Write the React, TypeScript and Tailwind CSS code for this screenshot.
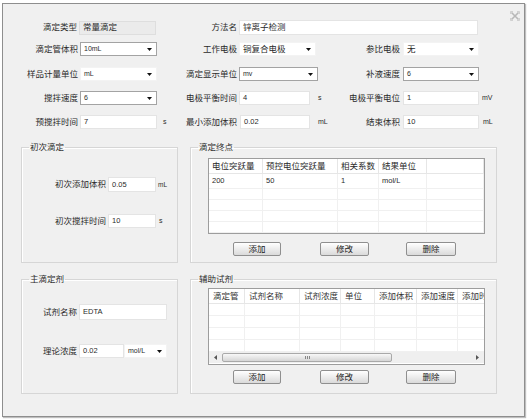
import React from "react";

const Arrow = () => (
  <svg width="5" height="3" viewBox="0 0 5 3" className="shrink-0">
    <path d="M0 0h5L2.5 3z" fill="#111" />
  </svg>
);

function Select({ w, value, bordered, small }: { w: string; value: string; bordered?: boolean; small?: boolean }) {
  return (
    <div
      className={`${w} h-[14px] shrink-0 bg-white flex items-center justify-between pl-[3px] pr-[4px] border ${
        bordered ? "border-[#a3a3a3]" : "border-[#f3f3f3]"
      }`}
    >
      <span className={small ? "text-[7px]" : "text-[8.5px]"}>{value}</span>
      <Arrow />
    </div>
  );
}

function Input({ w, value, h = "h-[14px]" }: { w: string; value?: string; h?: string }) {
  return (
    <div className={`${w} ${h} shrink-0 bg-white border border-[#e4e4e4] pl-[3px] flex items-center text-[7.5px]`}>
      {value}
    </div>
  );
}

function Btn({ label, w, ml }: { label: string; w: string; ml: string }) {
  return (
    <div
      className={`${w} ${ml} h-[14px] border border-[#8f8f8f] rounded-[2px] bg-gradient-to-b from-white to-[#dadada] flex items-center justify-center text-[8.5px] text-[#222]`}
    >
      {label}
    </div>
  );
}

function Group({ title, w, h, children }: { title: string; w: string; h: string; children: React.ReactNode }) {
  return (
    <fieldset className={`${w} ${h} border border-[#d6d6d6] shadow-[inset_1px_1px_0_#fff]`}>
      <legend className="ml-[7px] px-[1px] text-[8.5px] leading-[10px]">{title}</legend>
      {children}
    </fieldset>
  );
}

export default function App() {
  const endpointRows = [["200", "50", "1", "mol/L", ""], ["", "", "", "", ""], ["", "", "", "", ""], ["", "", "", "", ""], ["", "", "", "", ""]];
  const auxCols = ["滴定管", "试剂名称", "试剂浓度", "单位", "添加体积", "添加速度", "添加时间"];

  return (
    <div className="w-[528px] h-[420px] bg-white pt-[3px] pl-[2px] font-['Liberation_Sans','Noto_Sans_CJK_SC',sans-serif] text-[#2a2a2a]">
      <div className="relative w-[523px] h-[414px] border border-[#8e8e8e] bg-[#f0f0f0] shadow-[1px_1px_1px_rgba(0,0,0,0.25)] pt-[16px]">
        {/* close */}
        <svg className="absolute top-[7px] right-[4px]" width="10" height="10" viewBox="0 0 10 10">
          <path d="M1.5 1.5l7 7M8.5 1.5l-7 7" stroke="#b8b8b8" strokeWidth="1.6" />
          <path d="M0.5 3V0.5H3M7 0.5h2.5V3M9.5 7v2.5H7M3 9.5H0.5V7" stroke="#c8c8c8" strokeWidth="0.8" fill="none" />
        </svg>

        {/* row 1 */}
        <div className="flex items-center h-[15px] text-[8.5px]">
          <div className="w-[74px] text-right shrink-0">滴定类型</div>
          <div className="w-[77px] h-[14px] ml-[2px] bg-[#ebebeb] border border-[#dedede] pl-[3px] flex items-center">常量滴定</div>
          <div className="w-[81px] text-right shrink-0">方法名</div>
          <div className="w-[239px] h-[15px] ml-[2px] bg-white border border-[#e4e4e4] pl-[3px] flex items-center">锌离子检测</div>
        </div>

        {/* row 2 */}
        <div className="flex items-center h-[14px] mt-[7px] text-[8.5px]">
          <div className="w-[75px] text-right shrink-0">滴定管体积</div>
          <div className="ml-[2px]"><Select w="w-[77px]" value="10mL" bordered small /></div>
          <div className="w-[80px] text-right shrink-0">工作电极</div>
          <div className="ml-[2px]"><Select w="w-[77px]" value="铜复合电极" /></div>
          <div className="w-[84px] text-right shrink-0">参比电极</div>
          <div className="ml-[3px]"><Select w="w-[76px]" value="无" /></div>
        </div>

        {/* row 3 */}
        <div className="flex items-center h-[14px] mt-[11px] text-[8.5px]">
          <div className="w-[75px] text-right shrink-0">样品计量单位</div>
          <div className="ml-[2px]"><Select w="w-[77px]" value="mL" small /></div>
          <div className="w-[80px] text-right shrink-0">滴定显示单位</div>
          <div className="ml-[2px]"><Select w="w-[79px]" value="mv" bordered small /></div>
          <div className="w-[82px] text-right shrink-0">补液速度</div>
          <div className="ml-[3px]"><Select w="w-[76px]" value="6" bordered small /></div>
        </div>

        {/* row 4 */}
        <div className="flex items-center h-[14px] mt-[10px] text-[8.5px]">
          <div className="w-[75px] text-right shrink-0">搅拌速度</div>
          <div className="ml-[2px]"><Select w="w-[77px]" value="6" bordered small /></div>
          <div className="w-[80px] text-right shrink-0">电极平衡时间</div>
          <div className="ml-[2px]"><Input w="w-[71px]" value="4" /></div>
          <div className="w-[90px] shrink-0 flex justify-between items-center">
            <span className="pl-[8px] text-[7px]">s</span>
            <span>电极平衡电位</span>
          </div>
          <div className="ml-[3px]"><Input w="w-[76px]" value="1" /></div>
          <span className="ml-[3px] text-[7px]">mV</span>
        </div>

        {/* row 5 */}
        <div className="flex items-center h-[14px] mt-[10px] text-[8.5px]">
          <div className="w-[75px] text-right shrink-0">预搅拌时间</div>
          <div className="ml-[2px]"><Input w="w-[77px]" value="7" /></div>
          <div className="w-[80px] shrink-0 flex justify-between items-center">
            <span className="pl-[6px] text-[7px]">s</span>
            <span>最小添加体积</span>
          </div>
          <div className="ml-[3px]"><Input w="w-[70px]" value="0.02" /></div>
          <div className="w-[90px] shrink-0 flex justify-between items-center">
            <span className="pl-[8px] text-[7px]">mL</span>
            <span>结束体积</span>
          </div>
          <div className="ml-[3px]"><Input w="w-[76px]" value="10" /></div>
          <span className="ml-[4px] text-[7px]">mL</span>
        </div>

        {/* top groups */}
        <div className="flex gap-[12px] ml-[18px] mt-[13px]">
          <Group title="初次滴定" w="w-[157px]" h="h-[121px]">
            <div className="flex items-center mt-[25px] text-[8.5px]">
              <div className="w-[84px] text-right shrink-0">初次添加体积</div>
              <div className="ml-[2px]"><Input w="w-[48px]" h="h-[15px]" value="0.05" /></div>
              <span className="ml-[2px] text-[6.5px]">mL</span>
            </div>
            <div className="flex items-center mt-[22px] text-[8.5px]">
              <div className="w-[84px] text-right shrink-0">初次搅拌时间</div>
              <div className="ml-[2px]"><Input w="w-[48px]" h="h-[14px]" value="10" /></div>
              <span className="ml-[3px] text-[7px]">s</span>
            </div>
          </Group>

          <Group title="滴定终点" w="w-[307px]" h="h-[121px]">
            <div className="ml-[17px] mt-[6px] w-[277px] h-[76px] border border-[#9d9d9d] bg-white overflow-hidden">
              <div className="grid grid-cols-[54px_75px_41px_48px_1fr] h-[15px] text-[8.5px] border-b border-[#e6e6e6]">
                {["电位突跃量", "预控电位突跃量", "相关系数", "结果单位", ""].map((c, i) => (
                  <div key={i} className="pl-[3px] border-r border-[#e6e6e6] flex items-center whitespace-nowrap overflow-hidden">{c}</div>
                ))}
              </div>
              {endpointRows.map((r, ri) => (
                <div
                  key={ri}
                  className={`grid grid-cols-[54px_75px_41px_48px_1fr] ${ri === 0 ? "h-[15px]" : "h-[11px]"} text-[7.5px] border-b border-[#f0f0f0]`}
                >
                  {r.map((c, i) => (
                    <div key={i} className="pl-[3px] border-r border-[#f0f0f0] flex items-center">{c}</div>
                  ))}
                </div>
              ))}
            </div>
            <div className="flex mt-[8px]">
              <Btn label="添加" w="w-[48px]" ml="ml-[42px]" />
              <Btn label="修改" w="w-[49px]" ml="ml-[39px]" />
              <Btn label="删除" w="w-[50px]" ml="ml-[37px]" />
            </div>
          </Group>
        </div>

        {/* bottom groups */}
        <div className="flex gap-[12px] ml-[18px] mt-[11px]">
          <Group title="主滴定剂" w="w-[157px]" h="h-[120px]">
            <div className="flex items-center mt-[20px] text-[8.5px]">
              <div className="w-[55px] text-right shrink-0">试剂名称</div>
              <div className="ml-[2px]"><Input w="w-[88px]" h="h-[16px]" value="EDTA" /></div>
            </div>
            <div className="flex items-center mt-[24px] text-[8.5px]">
              <div className="w-[55px] text-right shrink-0">理论浓度</div>
              <div className="ml-[2px] flex">
                <Input w="w-[45px]" value="0.02" />
                <Select w="w-[43px]" value="mol/L" small />
              </div>
            </div>
          </Group>

          <Group title="辅助试剂" w="w-[307px]" h="h-[120px]">
            <div className="ml-[17px] mt-[4px] w-[277px] h-[77px] border border-[#9d9d9d] bg-white overflow-hidden flex flex-col">
              <div className="grid grid-cols-[36px_55px_41px_34px_42px_41px_40px] h-[15px] text-[8.5px] border-b border-[#e6e6e6] text-[#333]">
                {auxCols.map((c, i) => (
                  <div key={i} className="pl-[4px] border-r border-[#e6e6e6] flex items-center whitespace-nowrap overflow-hidden">{c}</div>
                ))}
              </div>
              {[0, 1, 2, 3].map((ri) => (
                <div key={ri} className="grid grid-cols-[36px_55px_41px_34px_42px_41px_40px] h-[12px] border-b border-[#f0f0f0]">
                  {auxCols.map((_, i) => (
                    <div key={i} className="border-r border-[#f0f0f0]" />
                  ))}
                </div>
              ))}
              {/* horizontal scrollbar */}
              <div className="flex h-[11px] bg-[#efefef]">
                <div className="w-[13px] flex items-center justify-center">
                  <svg width="3" height="5" viewBox="0 0 3 5"><path d="M3 0v5L0 2.5z" fill="#555" /></svg>
                </div>
                <div className="w-[170px] my-[1px] rounded-[2px] border border-[#a9a9a9] bg-gradient-to-b from-[#f8f8f8] to-[#d6d6d6] flex items-center justify-center">
                  <div className="flex gap-[1px]">
                    <div className="w-[1px] h-[3px] bg-[#888]" />
                    <div className="w-[1px] h-[3px] bg-[#888]" />
                    <div className="w-[1px] h-[3px] bg-[#888]" />
                  </div>
                </div>
                <div className="flex-1" />
                <div className="w-[13px] flex items-center justify-center">
                  <svg width="3" height="5" viewBox="0 0 3 5"><path d="M0 0v5L3 2.5z" fill="#555" /></svg>
                </div>
              </div>
            </div>
            <div className="flex mt-[5px]">
              <Btn label="添加" w="w-[48px]" ml="ml-[42px]" />
              <Btn label="修改" w="w-[49px]" ml="ml-[39px]" />
              <Btn label="删除" w="w-[50px]" ml="ml-[37px]" />
            </div>
          </Group>
        </div>
      </div>
    </div>
  );
}
